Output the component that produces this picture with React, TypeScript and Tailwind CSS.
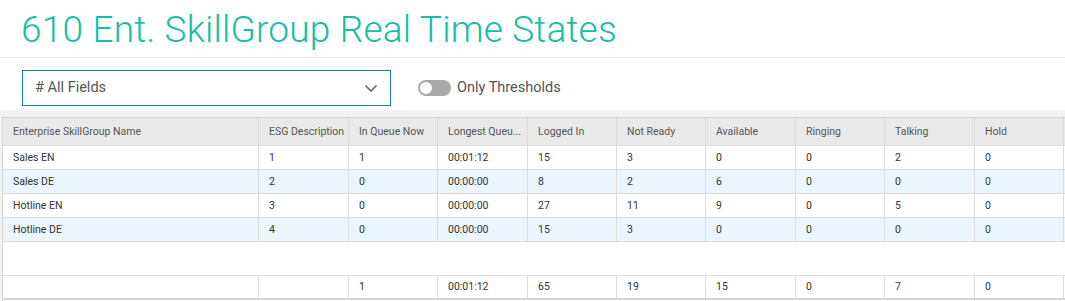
import React from "react";

const widths = [256, 90, 89, 90, 89, 89, 90, 89, 90, 89, 120];
const headers = [
  "Enterprise SkillGroup Name",
  "ESG Description",
  "In Queue Now",
  "Longest Queu...",
  "Logged In",
  "Not Ready",
  "Available",
  "Ringing",
  "Talking",
  "Hold",
  "",
];
const rows = [
  ["Sales EN", "1", "1", "00:01:12", "15", "3", "0", "0", "2", "0", ""],
  ["Sales DE", "2", "0", "00:00:00", "8", "2", "6", "0", "0", "0", ""],
  ["Hotline EN", "3", "0", "00:00:00", "27", "11", "9", "0", "5", "0", ""],
  ["Hotline DE", "4", "0", "00:00:00", "15", "3", "0", "0", "0", "0", ""],
];
const footer = ["", "", "1", "00:01:12", "65", "19", "15", "0", "7", "0", ""];

function Row({ cells, className, cellClass }: { cells: string[]; className: string; cellClass: string }) {
  return (
    <div className={`flex ${className}`}>
      {cells.map((c, i) => (
        <div
          key={i}
          style={{ width: widths[i] }}
          className={`shrink-0 border-r border-[#dcdcdc] pl-[10px] flex items-center whitespace-nowrap overflow-hidden ${cellClass}`}
        >
          {c}
        </div>
      ))}
    </div>
  );
}

export default function App() {
  return (
    <div className="w-[1065px] h-[301px] overflow-hidden bg-white" style={{ fontFamily: "Roboto, 'Liberation Sans', sans-serif" }}>
      <div className="h-[58px] border-b border-[#e8e8e8] pl-[21px] flex items-end">
        <div className="text-[37px] leading-none font-light text-[#16bea4] pb-[9px] tracking-[0.2px]">
          610 Ent. SkillGroup Real Time States
        </div>
      </div>
      <div className="h-[52px] flex items-center pl-[22px]">
        <div className="w-[369px] h-[36px] border border-[#177fa7] flex items-center justify-between pl-[12px] pr-[12px] mt-[8px]">
          <span className="text-[14.5px] text-[#555]">#&nbsp;All Fields</span>
          <svg width="14" height="9" viewBox="0 0 14 9" fill="none">
            <path d="M1.5 1.5 L7 7 L12.5 1.5" stroke="#666" strokeWidth="1.6" />
          </svg>
        </div>
        <div className="flex items-center ml-[27px] mt-[8px]">
          <div className="w-[33px] h-[16px] rounded-full bg-[#a9a9a9] relative">
            <div className="absolute left-[2px] top-[2px] w-[12px] h-[12px] rounded-full bg-white" />
          </div>
          <span className="ml-[6px] text-[14.5px] text-[#555]">Only Thresholds</span>
        </div>
      </div>
      <div className="bg-[#f3f3f3] pt-[7px] pl-[2px] h-[191px]">
        <div className="bg-white border-l border-t border-[#d6d6d6] text-[10.5px] text-[#333] w-[1200px] h-[184px] flex flex-col">
          <Row cells={headers} className="h-[28px] bg-[#e9e9e9] border-b border-[#dcdcdc]" cellClass="text-[#555]" />
          {rows.map((r, i) => (
            <Row
              key={i}
              cells={r}
              className={`h-[24px] border-b border-[#dcdcdc] ${i % 2 === 1 ? "bg-[#eaf6fb]" : "bg-white"}`}
              cellClass=""
            />
          ))}
          <div className="h-[34px] border-b border-[#dcdcdc]" />
          <Row cells={footer} className="h-[24px] border-b-2 border-[#d6d6d6]" cellClass="" />
        </div>
      </div>
    </div>
  );
}
